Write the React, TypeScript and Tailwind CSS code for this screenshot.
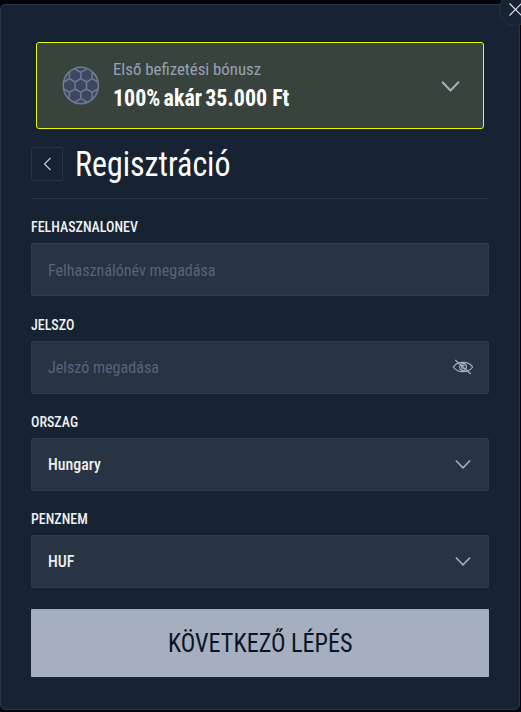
import { useState } from "react";

const Chevron = ({ className }: { className?: string }) => (
  <svg
    className={className}
    viewBox="0 0 18 12"
    fill="none"
    stroke="currentColor"
    strokeWidth="1.8"
  >
    <path d="M1 1.5 9 9.8 17 1.5" />
  </svg>
);

const EyeOff = () => (
  <svg
    className="w-[22px] h-[16px] text-[#a6afc0]"
    viewBox="0 0 22 16"
    fill="none"
    stroke="currentColor"
    strokeWidth="1.2"
  >
    <path d="M1.3 8C3.6 4.6 7 3.3 11 3.3S18.4 4.6 20.7 8C18.4 11.4 15 12.7 11 12.7S3.6 11.4 1.3 8Z" />
    <circle cx="11" cy="8" r="3.4" />
    <path d="M12.5 7A1.6 1.6 0 1 0 11.5 9.5" />
    <path d="M3.2 1 18.8 15" />
  </svg>
);

const Ball = () => (
  <svg
    className="w-[38px] h-[39px]"
    viewBox="0 0 38 39"
    fill="#3d4860"
    stroke="#6f7b90"
    strokeWidth="1.5"
    strokeLinejoin="round"
  >
    <ellipse cx="18.8" cy="19.5" rx="17.6" ry="18.2" />
    <path
      fill="none"
      d="M18.8 12.7 24.5 16V23L18.8 26.3 13.1 23V16ZM13.1 16 7.4 12.7 1.8 16M13.1 23 7.4 26.3 1.8 23M24.5 16 30.2 12.7 35.8 16M24.5 23 30.2 26.3 35.8 23M18.8 12.7V6.3L12.5 2.8M18.8 6.3 25.1 2.8M18.8 26.3V32.7L12.5 36.2M18.8 32.7 25.1 36.2M7.4 12.7V6M30.2 12.7V6M7.4 26.3V33M30.2 26.3V33"
    />
  </svg>
);

type FieldProps = {
  label: string;
  placeholder?: string;
  value?: string;
  icon?: React.ReactNode;
};

const Field = ({ label, placeholder, value, icon }: FieldProps) => (
  <div className="h-[97.33px]">
    <p className="h-[25px] text-[15px] leading-[18px] font-medium origin-left scale-x-[0.93] text-[#f0f1f3]">
      {label}
    </p>
    <div className="flex items-center justify-between h-[53px] pl-4 pr-[14px] border border-[#2f3c4f] rounded-[2px] bg-[#283343]">
      {value ? (
        <span className="text-[17px] font-medium origin-left scale-x-[0.935] text-[#eceef1]">
          {value}
        </span>
      ) : (
        <input
          className="w-80 pt-0.5 bg-transparent outline-none text-[17px] origin-left scale-x-[0.945] placeholder:text-[#586477] placeholder:opacity-100"
          placeholder={placeholder}
        />
      )}
      {icon}
    </div>
  </div>
);

const App = () => {
  const [fields] = useState<FieldProps[]>([
    { label: "FELHASZNALONEV", placeholder: "Felhasználónév megadása" },
    { label: "JELSZO", placeholder: "Jelszó megadása", icon: <EyeOff /> },
    {
      label: "ORSZAG",
      value: "Hungary",
      icon: <Chevron className="w-[16px] h-[11px] mr-[3px] text-[#a6afc0]" />,
    },
    {
      label: "PENZNEM",
      value: "HUF",
      icon: <Chevron className="w-[16px] h-[11px] mr-[3px] text-[#a6afc0]" />,
    },
  ]);

  return (
    <div className="w-[521px] h-[712px] pt-1 overflow-hidden bg-[#020308] font-['Roboto_Condensed',Roboto,sans-serif] [font-stretch:75%]">
      <main className="relative w-[520px] h-[706px] pt-[37px] px-[30px] border border-[#293548] rounded-[5px] bg-[#172333]">
        <button className="absolute -top-[13px] -right-[13px] w-[33px] h-[34px] rounded-full border border-[#243143] bg-[#172333] flex items-center justify-center">
          <svg
            className="w-[13px] h-[13px] text-[#e1e4e9]"
            viewBox="0 0 13 13"
            stroke="currentColor"
            strokeWidth="1.1"
          >
            <path d="M.5.5 12.5 12.5M12.5.5.5 12.5" />
          </svg>
        </button>

        <section className="flex items-center mx-[5px] h-[87px] pl-[25px] pr-[23px] border border-[#e8fb08] rounded-[3px] bg-[#39433d]">
          <Ball />
          <div className="ml-[13px] grow">
            <p className="text-[17px] leading-6 origin-left scale-x-[0.99] text-[#97a1b3]">
              Első befizetési bónusz
            </p>
            <p className="text-[24px] leading-[34px] font-bold origin-left scale-x-[0.915] text-white whitespace-nowrap">
              <span className="[word-spacing:-2px]">100% akár 35.000</span> Ft
            </p>
          </div>
          <Chevron className="w-[19px] h-[13px] mt-0.5 text-[#a6afc0]" />
        </section>

        <header className="flex items-center h-[70px] border-b border-[#293548]">
          <button className="w-8 h-[34px] border border-[#293548] rounded-[2px] flex items-center justify-center">
            <svg
              className="w-[8px] h-[14px] text-[#c3c9d3]"
              viewBox="0 0 8 14"
              fill="none"
              stroke="currentColor"
              strokeWidth="1.2"
            >
              <path d="M7.5 1 1.5 7 7.5 13" />
            </svg>
          </button>
          <h1 className="ml-3 pt-0.5 text-[35px] leading-[40px] origin-left scale-x-[0.912] text-white">
            Regisztráció
          </h1>
        </header>

        <div className="pt-[19.4px]">
          {fields.map((field) => (
            <Field key={field.label} {...field} />
          ))}
        </div>

        <button className="w-full h-[68px] mt-[1.2px] pt-0.5 rounded-[1px] bg-[#a6afc0] text-[26px] text-[#0b1424]">
          <span className="inline-block scale-x-[0.93]">KÖVETKEZŐ LÉPÉS</span>
        </button>
      </main>
    </div>
  );
};

export default App;
